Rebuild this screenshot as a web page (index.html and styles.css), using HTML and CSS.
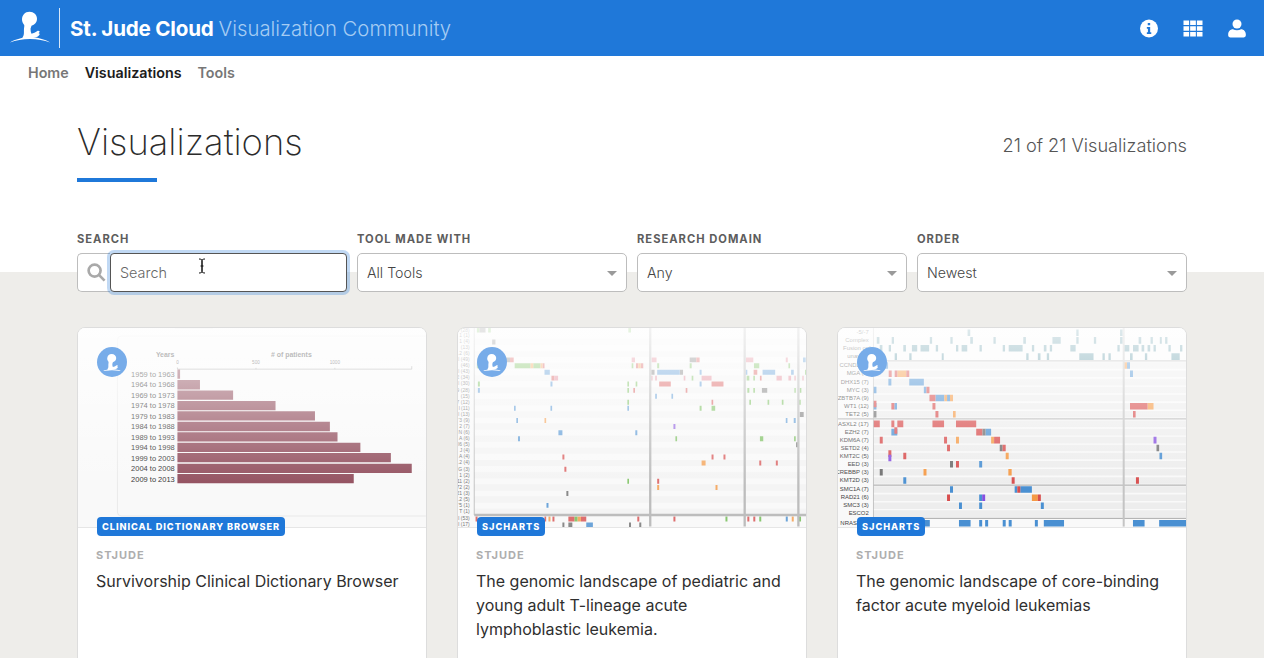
FILE: index.html
```html
<!DOCTYPE html>
<html lang="en">
<head>
<meta charset="utf-8">
<title>St. Jude Cloud Visualization Community</title>
<link rel="stylesheet" href="styles.css">
</head>
<body>
<svg class="defs" width="0" height="0" aria-hidden="true">
  <symbol id="child" viewBox="0 0 40 32">
    <path d="M19.500 .8c4.300 0 7.500 3 7.500 7 0 3.500-2.300 6-5.500 7l-1 3 .3 3 .7 2c2-.3 4-1.500 5.500-2.500 1-.7 2-.5 2.500 0 .5.800-.3 1.500-1 2 .8 0 1.500.5 1 1.500-.8 1.500-3 2.500-5.500 3-3 .6-7 .9-11.500 1.200-.5-1 .5-2.200 1-3.500.8-2 .2-4.500.5-7 .2-1.500.5-2.500.2-3.500-1.200-1.400-2.200-3.300-2.200-5.500 0-4.200 3-7.700 7.500-7.700z"/>
    <path d="M0 31.600C5 28.200 12.500 26.300 20 26.300s15 1.900 20 5.300c-5.600-2.500-12.600-3.700-20-3.700S5.600 29.100 0 31.600z"/>
  </symbol>
</svg>

<div class="page">
  <header class="topbar">
    <div class="brand">
      <svg class="brand-logo"><use href="#child"/></svg>
      <span class="brand-rule"></span>
      <span class="brand-name">St. Jude Cloud</span>
      <span class="brand-sub">Visualization Community</span>
    </div>
    <div class="top-icons">
      <svg class="top-icon" viewBox="0 0 20 20"><circle cx="10" cy="10" r="10"/><path class="cut" d="M8.600 3.800h2.700v2.600H8.600zM7.600 8.200h3.700v6h1.200v2H7.600v-2h1.200v-4H7.600z"/></svg>
      <svg class="top-icon top-icon-grid" viewBox="0 0 20 20"><path d="M0 1.500h5.900v4.700H0zM7 1.500h6v4.700H7zM14.100 1.500H20v4.700h-5.900zM0 7.600h5.900v4.800H0zM7 7.600h6v4.800H7zM14.100 7.600H20v4.800h-5.900zM0 13.800h5.900v4.700H0zM7 13.800h6v4.700H7zM14.100 13.800H20v4.700h-5.900z"/></svg>
      <svg class="top-icon" viewBox="0 0 20 20"><circle cx="10" cy="5" r="5"/><path d="M5.500 10.800c1.300.8 2.800 1.200 4.500 1.200s3.200-.4 4.500-1.200c3 .1 5.300 2.400 5.300 5.400v1.300c0 1.400-1.100 2.500-2.500 2.500H2.700C1.300 20 .2 18.900.2 17.500v-1.300c0-3 2.300-5.300 5.300-5.400z"/></svg>
    </div>
  </header>

  <nav class="subnav">
    <a class="subnav-link">Home</a>
    <a class="subnav-link is-active">Visualizations</a>
    <a class="subnav-link">Tools</a>
  </nav>

  <main class="content">
    <section class="head-row">
      <div>
        <h1 class="page-title">Visualizations</h1>
        <div class="title-rule"></div>
      </div>
      <div class="count">21 of 21 Visualizations</div>
    </section>

    <section class="filters">
      <div class="filter">
        <label class="filter-label">Search</label>
        <div class="search-box">
          <span class="search-icon">
            <svg viewBox="0 0 20 20" width="19" height="19"><circle cx="8" cy="8" r="6.300"/><path d="M12.800 12.800l5.700 5.700"/></svg>
          </span>
          <div class="search-input">Search
            <svg class="ibeam" viewBox="0 0 8 16" width="8" height="16"><path d="M1 1c1.500 0 3 .3 3 1.500v11C4 14.700 2.500 15 1 15M7 1C5.500 1 4 1.300 4 2.500v11c0 1.200 1.500 1.500 3 1.500M2.500 8h3"/></svg>
          </div>
        </div>
      </div>
      <div class="filter">
        <label class="filter-label">Tool made with</label>
        <div class="select">All Tools</div>
      </div>
      <div class="filter">
        <label class="filter-label">Research domain</label>
        <div class="select">Any</div>
      </div>
      <div class="filter">
        <label class="filter-label">Order</label>
        <div class="select">Newest</div>
      </div>
    </section>

    <section class="cards">
      <article class="card">
        <div class="thumb">
          <svg class="chart" viewBox="3 21 1050 600">
            <path class="frame" d="M295 22H410M1053 45H134Q122 45 122 57V576Q122 588 134 588H1053"/>
            <text class="t-head" x="238" y="109">Years</text>
            <text class="t-head" x="585" y="109"># of patients</text>
            <text class="t-tick" x="303" y="130" text-anchor="middle">0</text>
            <text class="t-tick" x="540" y="130" text-anchor="middle">500</text>
            <text class="t-tick" x="778" y="130" text-anchor="middle">1000</text>
            <path class="axis" d="M303 140V145H1010V136M540 141V145M778 141V145"/>
            <g class="t-year" text-anchor="end">
              <text x="295" y="169">1959 to 1963</text>
              <text x="295" y="200">1964 to 1968</text>
              <text x="295" y="232">1969 to 1973</text>
              <text x="295" y="263">1974 to 1978</text>
              <text x="295" y="295">1979 to 1983</text>
              <text x="295" y="326">1984 to 1988</text>
              <text x="295" y="358">1989 to 1993</text>
              <text x="295" y="389">1994 to 1998</text>
              <text x="295" y="421">1999 to 2003</text>
              <text x="295" y="452">2004 to 2008</text>
              <text x="295" y="484">2009 to 2013</text>
            </g>
            <path class="bars" d="M303 160H311M303 192H371M303 223H471M303 255H599M303 286H718M303 318H763M303 349H786M303 381H855M303 412H947M303 444H1010M303 475H835"/>
          </svg>
          <svg class="avatar"><use href="#child"/></svg>
          <span class="badge">Clinical Dictionary Browser</span>
        </div>
        <div class="card-body">
          <div class="owner">STJUDE</div>
          <h2 class="card-title">Survivorship Clinical Dictionary Browser</h2>
        </div>
      </article>

      <article class="card">
        <div class="thumb">
          <svg class="chart" viewBox="21 21 1050 600">
            <path class="rows" d="M70 63H1071M70 99H1071M70 135H1071M70 172H1071M70 209H1071M70 245H1071M70 282H1071M70 318H1071M70 355H1071M70 391H1071M70 428H1071M70 465H1071M70 502H1071M70 538H1071M70 575H1071"/>
            <g class="t-gene" text-anchor="end">
              <text x="56" y="33">(28)</text><text x="56" y="49">1 (1)</text><text x="56" y="67">1 (4)</text><text x="56" y="85">(13)</text><text x="56" y="103">.2 (6)</text><text x="56" y="121">l (49)</text><text x="56" y="139">(46)</text><text x="56" y="158">l (43)</text><text x="56" y="176">2 (34)</text><text x="56" y="194">l (30)</text><text x="56" y="213">9 (28)</text><text x="56" y="231">(15)</text><text x="56" y="249">7 (12)</text><text x="56" y="267">l (11)</text><text x="56" y="286">l (13)</text><text x="56" y="304">'3 (9)</text><text x="56" y="322">2 (7)</text><text x="56" y="341">N (6)</text><text x="56" y="359">A (6)</text><text x="56" y="377">l6 (5)</text><text x="56" y="395">J (4)</text><text x="56" y="414">A (4)</text><text x="56" y="432">.2 (4)</text><text x="56" y="451">G (3)</text><text x="56" y="469">1 (2)</text><text x="56" y="487">11 (2)</text><text x="56" y="506">72 (2)</text><text x="56" y="524">21 (3)</text><text x="56" y="542">.2 (5)</text><text x="56" y="560">'5 (1)</text><text x="56" y="579">T (1)</text><text x="56" y="601">l (53)</text><text x="56" y="619">l (17)</text>
            </g>
            <path class="axis2" d="M70 21V585"/>
            <g class="thin">
              <path class="m-green" d="M78 27H86M112 27H120M535 27H543M78 135H84M192 135H240M248 135H270M545 135H550M622 135H628M720 135H726M914 135H930M1018 135H1023M1068 154H1072M726 172H731M892 172H900M912 172H917M81 190H87M532 190H537M557 190H562M532 209H537M894 209H900M912 209H917M1036 209H1040M1052 209H1057M532 245H537M900 245H905M955 245H960M998 245H1003M1050 245H1055M750 263H756M786 263H797M677 355H682M932 355H942M1035 355H1040M532 483H537M828 597H834M930 597H936M1050 597H1056M372 597H382"/>
              <path class="m-grey" d="M86 27H104M124 63H134M80 117H92M142 117H178M720 117H740M604 154H614M690 154H700M938 209H954M1052 282H1064M1041 373H1047M348 520H354M336 615H342M354 615H366M537 615H543M568 615H574"/>
              <path class="m-red" d="M178 117H189M276 135H282M558 135H565M572 135H580M740 117H750M913 154H924M303 172H312M932 172H937M628 190H663M786 190H822M550 209H555M708 209H713M786 245H791M336 410H342M786 410H792M822 410H828M930 428H936M980 428H986M342 447H348M622 483H628M74 597H80M282 597H287M306 597H312M354 597H372M392 597H408M562 597H568M671 597H677M894 597H900M912 597H918"/>
              <path class="m-pink" d="M545 117H555M605 117H620M890 117H912M1010 117H1016M312 172H323M604 172H608M616 172H621M702 172H707M756 172H786M982 172H998M1018 172H1026M1036 172H1040M1060 172H1064"/>
              <path class="m-blue" d="M1062 117H1070M282 154H298M622 154H690M750 154H756M888 154H894M940 154H978M1026 154H1034M300 190H306M750 190H756M81 209H87M616 227H621M665 227H670M190 263H195M300 263H305M532 263H537M197 300H202M1010 300H1015M1034 300H1040M324 337H336M556 337H562M202 355H208M288 556H294M1010 597H1016M408 615H428"/>
              <path class="m-orange" d="M240 135H248M270 135H276M565 135H572M282 300H287M756 428H768M622 502H628M798 502H804M294 597H300M382 597H392M1028 597H1034"/>
              <path class="m-purple" d="M671 318H677"/>
            </g>
            <path class="sep" d="M70 585H1071M601 21V620M886 21V620M1048 21V620"/>
          </svg>
          <svg class="avatar"><use href="#child"/></svg>
          <span class="badge">SJCharts</span>
        </div>
        <div class="card-body">
          <div class="owner">STJUDE</div>
          <h2 class="card-title">The genomic landscape of pediatric and young adult T-lineage acute lymphoblastic leukemia.</h2>
        </div>
      </article>

      <article class="card">
        <div class="thumb">
          <svg class="chart" viewBox="21 21 1050 600">
            <path class="bands" d="M128 134H1071M128 159H1071M128 184H1071M128 208H1071M128 232H1071M128 257H1071M128 281H1071M128 310H1071M128 335H1071M128 359H1071M128 383H1071M128 407H1071M128 432H1071M128 456H1071M128 481H1071M128 508H1071M128 533H1071M128 557H1071M128 581H1071"/>
            <g class="t-gene3" text-anchor="end">
              <text x="114" y="39">-5/-7</text><text x="114" y="63">Complex</text><text x="128" y="87">Fusion only</text><text x="140" y="112">unavailable</text>
              <text x="114" y="139">CCND2 (8)</text><text x="114" y="164">MGA (9)</text><text x="114" y="189">DHX15 (7)</text><text x="114" y="213">MYC (3)</text><text x="114" y="237">ZBTB7A (9)</text><text x="114" y="262">WT1 (12)</text><text x="114" y="286">TET2 (5)</text><text x="114" y="315">ASXL2 (17)</text><text x="114" y="340">EZH2 (7)</text><text x="114" y="364">KDM6A (7)</text><text x="114" y="388">SETD2 (4)</text><text x="114" y="412">KMT2C (5)</text><text x="114" y="437">EED (3)</text><text x="114" y="461">CREBBP (3)</text><text x="114" y="486">KMT2D (3)</text><text x="114" y="513">SMC1A (7)</text><text x="114" y="538">RAD21 (6)</text><text x="114" y="562">SMC3 (3)</text><text x="114" y="586">ESCO2</text><text x="78" y="615">NRAS</text>
            </g>
            <g class="thick">
              <path class="m-teal" d="M412 35H420M740 35H747M872 35H880M138 58H146M183 58H190M298 58H305M360 58H367M420 58H428M490 58H497M580 58H588M668 58H693M740 58H747M793 58H800M872 58H880M928 58H936M964 58H971M992 58H998M1008 58H1015M147 82H155M174 82H181M218 82H226M244 82H260M270 82H296M316 82H323M377 82H384M394 82H411M448 82H455M518 82H525M536 82H578M606 82H613M642 82H650M660 82H667M722 82H738M864 82H871M884 82H900M911 82H928M937 82H945M955 82H963M973 82H980M1018 82H1025M1053 82H1060M192 107H199M236 107H243M334 107H340M589 107H596M624 107H632M651 107H658M749 107H792M819 107H826M837 107H844M902 107H910M947 107H954M1027 107H1052"/>
              <path class="m-blue" d="M128 134H172M893 134H902M902 159H911M173 184H182M236 184H280M128 208H137M280 208H288M315 232H342M350 232H359M191 257H199M128 257H137M182 335H200M466 335H483M991 407H999M447 432H456M218 481H227M359 508H368M554 508H562M571 508H606M447 533H456M386 557H395M447 557H456M633 557H642M128 610H298M386 610H421M447 610H456M465 610H474M518 610H527M536 610H545M615 610H624M642 610H703M911 610H946M990 610H1071"/>
              <path class="m-orange" d="M883 134H893M200 159H227M342 232H350M359 232H368M955 257H973M368 281H376M377 359H386M483 359H492M527 407H536M279 456H288M535 456H545M606 533H624"/>
              <path class="m-red" d="M174 159H183M192 159H200M227 159H236M288 208H297M297 232H315M128 250H137M182 257H191M306 257H315M902 257H955M315 281H324M911 281H919M128 310H147M182 310H191M200 310H218M306 310H341M377 310H438M191 330H200M438 335H457M147 359H156M341 359H350M492 359H510M350 383H359M517 383H527M218 407H227M377 432H386M545 481H554M920 481H929M562 508H571M350 533H359M624 533H633M173 400H182"/>
              <path class="m-grey" d="M128 281H137M457 335H466M509 383H517M982 383H990M359 432H368M147 456H156"/>
              <path class="m-purple" d="M973 359H982M173 413H182M456 533H465"/>
            </g>
            <path class="axis2" d="M128 21V620"/>
            <path class="sep2" d="M128 120H1071M21 295H1071M128 495H1071M128 595H1071"/>
            <path class="sep3" d="M883 21V620"/>
          </svg>
          <svg class="avatar"><use href="#child"/></svg>
          <span class="badge">SJCharts</span>
        </div>
        <div class="card-body">
          <div class="owner">STJUDE</div>
          <h2 class="card-title">The genomic landscape of core-binding factor acute myeloid leukemias</h2>
        </div>
      </article>
    </section>
  </main>
</div>
</body>
</html>
```

FILE: styles.css
```css
* { box-sizing: border-box; }
html, body { margin: 0; padding: 0; height: 100%; overflow: hidden; }
body { font-family: Inter, "Noto Sans", "Liberation Sans", sans-serif; background: #fff; color: #333; }
.defs { position: absolute; }

.page { height: 658px; overflow: hidden; background: linear-gradient(#fff 272px, #eeedea 272px); }

.topbar { height: 56px; background: #1f78d9; display: flex; align-items: center; justify-content: space-between; padding: 0 18px 0 10px; }
.brand { display: flex; align-items: center; }
.brand-logo { width: 40px; height: 32px; fill: #fff; margin-top: -3px; }
.brand-rule { width: 1px; height: 40px; background: #d7e7f8; margin: 0 10px 0 9px; }
.brand-name { font-size: 20.600px; font-weight: 700; color: #fff; letter-spacing: -.2px; margin-right: 5px; }
.brand-sub { font-size: 20.300px; font-weight: 300; color: #a5ccf3; }
.top-icons { display: flex; align-items: center; gap: 25px; }
.top-icon { width: 18px; height: 19px; fill: #fff; display: block; }
.top-icon-grid { width: 20px; }
.top-icon .cut { fill: #1f78d9; }

.subnav { display: flex; gap: 16px; padding: 8px 28px 0; height: 36px; font-size: 14.300px; font-weight: 600; }
.subnav-link { color: #777; }
.subnav-link.is-active { color: #1c1c1c; }

.content { padding: 0 77px; }
.head-row { display: flex; justify-content: space-between; padding-top: 30px; height: 140px; }
.page-title { margin: 0; font-size: 36.400px; line-height: 40px; font-weight: 250; color: #2b2b2b; }
.title-rule { width: 80px; height: 4px; background: #1f78d9; margin: 16px 0 0; }
.count { font-size: 18.200px; font-weight: 300; color: #555; padding-top: 11px; line-height: 24px; }

.filters { display: grid; grid-template-columns: repeat(4, 1fr); gap: 10px; }
.filter-label { display: block; font-size: 11.200px; font-weight: 700; letter-spacing: 1px; text-transform: uppercase; color: #5d5d5d; line-height: 14px; margin-bottom: 7px; }
.search-box { display: flex; height: 39px; position: relative; }
.search-icon { width: 33px; background: #fff; border: 1px solid #bdbdbd; border-right: 0; border-radius: 5px 0 0 5px; display: flex; align-items: center; justify-content: center; padding-left: 4px; }
.search-icon svg { fill: none; stroke: #a9a9a9; stroke-width: 2.800; }
.search-input { flex: 1; background: #fff; border: 1px solid #555; border-radius: 4px; box-shadow: 0 0 0 3px rgba(31,120,217,.28); padding-left: 9px; font-size: 14.400px; font-weight: 300; color: #666; display: flex; align-items: center; position: relative; }
.ibeam { position: absolute; left: 87px; top: 4px; fill: none; stroke: #111; stroke-width: 1; }
.select { height: 39px; background: #fff; border: 1px solid #bdbdbd; border-radius: 5px; padding-left: 9px; font-size: 14.200px; font-weight: 300; color: #444; display: flex; align-items: center; position: relative; }
.select::after { content: ""; position: absolute; right: 9px; top: 17px; border: 5.500px solid transparent; border-top: 5px solid #9a9a9a; border-bottom: 0; }

.cards { display: grid; grid-template-columns: repeat(3, 1fr); gap: 30px; margin-top: 35px; }
.card { height: 380px; background: #fff; border: 1px solid #ddd; border-radius: 8px; overflow: hidden; }
.thumb { position: relative; height: 200px; background: #f9f9f9; border-bottom: 1px solid #e6e6e6; }
.thumb::after { content: ""; position: absolute; inset: 0; background: linear-gradient(rgba(255,255,255,.8), rgba(255,255,255,0) 80%); }
.chart { display: block; width: 100%; height: 100%; font-family: "Liberation Sans", Arial, sans-serif; }
.avatar { position: absolute; z-index: 2; left: 19px; top: 19px; width: 30px; height: 30px; padding: 5px 3px 3px; border-radius: 50%; background: #77ace9; fill: #fff; }
.badge { position: absolute; z-index: 3; left: 19px; top: 189px; height: 19px; padding: 0 5px; display: flex; align-items: center; background: #1f78d9; color: #fff; border-radius: 4px; font-size: 9.200px; font-weight: 800; letter-spacing: .95px; text-transform: uppercase; }
.card-body { padding: 20px 18px 0; }
.owner { font-size: 11px; font-weight: 700; letter-spacing: 1px; color: #aeaeae; line-height: 14px; }
.card-title { margin: 7px 0 0; font-size: 16px; line-height: 24px; font-weight: 400; color: #2f2f2f; }

/* chart marks, in the chart's own viewBox units */
.frame { fill: none; stroke: #e2e2e2; stroke-width: 2; }
.axis { fill: none; stroke: #888; stroke-width: 2; }
.axis2 { fill: none; stroke: #aaa; stroke-width: 2; }
.bars { fill: none; stroke: #93505f; stroke-width: 28; }
.t-head { font-size: 21px; font-weight: 700; fill: #333; }
.t-tick { font-size: 14px; fill: #444; }
.t-year { font-size: 22.600px; fill: #333; }
.t-gene { font-size: 15px; fill: #777; }
.t-gene3 { font-size: 18px; fill: #444; }
.rows { fill: none; stroke: #f4f4f4; stroke-width: 18; }
.bands { fill: none; stroke: #ededed; stroke-width: 20; }
.thin { opacity: .8; }
.thin path, .thick path { fill: none; }
.thin path { stroke-width: 15; }
.thick path { stroke-width: 20; }
.sep { fill: none; stroke: #bdbdbd; stroke-width: 7; }
.sep2 { fill: none; stroke: #b5b5b5; stroke-width: 4; }
.sep3 { fill: none; stroke: #c4c4c4; stroke-width: 6; }
.m-green { stroke: #6dbb4e; }
.m-grey { stroke: #6f6f6f; }
.m-red { stroke: #d84d4d; }
.m-pink { stroke: #e37d8e; }
.m-blue { stroke: #4a90d2; }
.m-orange { stroke: #f59a45; }
.m-purple { stroke: #8650e0; }
.m-teal { stroke: #6098a6; }
```
